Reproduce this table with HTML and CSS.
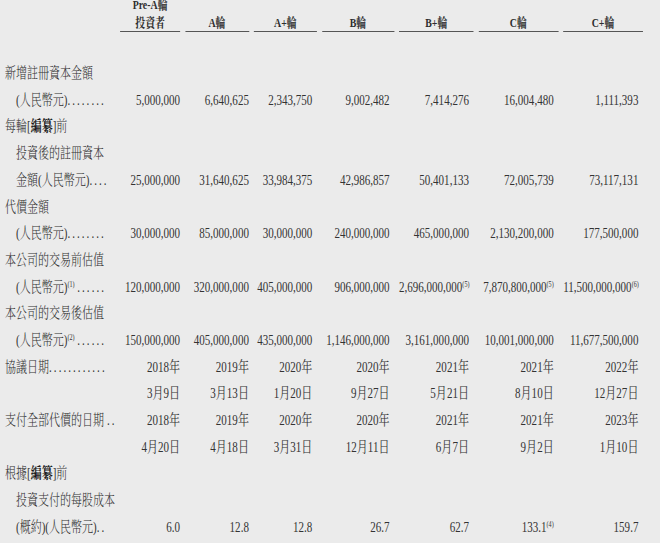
FILE: index.html
```html
<!DOCTYPE html>
<html lang="zh-Hant">
<head>
<meta charset="utf-8">
<title>投資者</title>
<link rel="stylesheet" href="styles.css">
</head>
<body>
<div class="frame">
<div class="page">
  <div class="row head">
    <div class="hl"></div>
    <div class="h">Pre-A輪<br>投資者</div>
    <div class="h">A輪</div>
    <div class="h">A+輪</div>
    <div class="h">B輪</div>
    <div class="h">B+輪</div>
    <div class="h">C輪</div>
    <div class="h">C+輪</div>
  </div>

  <div class="tbody">
    <div class="row"><div class="lab">新增註冊資本金額</div></div>
    <div class="row">
      <div class="lab in">(人民幣元)<span class="dots">........</span></div>
      <div class="v">5,000,000</div><div class="v">6,640,625</div><div class="v p">2,343,750</div><div class="v p">9,002,482</div><div class="v p">7,414,276</div><div class="v p">16,004,480</div><div class="v p">1,111,393</div>
    </div>
    <div class="row"><div class="lab">每輪[<b>編纂</b>]前</div></div>
    <div class="row"><div class="lab in">投資後的註冊資本</div></div>
    <div class="row">
      <div class="lab in">金額(人民幣元)<span class="dots">....</span></div>
      <div class="v">25,000,000</div><div class="v">31,640,625</div><div class="v p">33,984,375</div><div class="v p">42,986,857</div><div class="v p">50,401,133</div><div class="v p">72,005,739</div><div class="v p">73,117,131</div>
    </div>
    <div class="row"><div class="lab">代價金額</div></div>
    <div class="row">
      <div class="lab in">(人民幣元)<span class="dots">........</span></div>
      <div class="v">30,000,000</div><div class="v">85,000,000</div><div class="v p">30,000,000</div><div class="v p">240,000,000</div><div class="v p">465,000,000</div><div class="v p">2,130,200,000</div><div class="v p">177,500,000</div>
    </div>
    <div class="row"><div class="lab">本公司的交易前估值</div></div>
    <div class="row">
      <div class="lab in">(人民幣元)<span class="sup">(1)</span> <span class="dots">......</span></div>
      <div class="v">120,000,000</div><div class="v">320,000,000</div><div class="v p">405,000,000</div><div class="v p">906,000,000</div><div class="v p">2,696,000,000<span class="sup">(5)</span></div><div class="v p">7,870,800,000<span class="sup">(5)</span></div><div class="v p">11,500,000,000<span class="sup">(6)</span></div>
    </div>
    <div class="row"><div class="lab">本公司的交易後估值</div></div>
    <div class="row">
      <div class="lab in">(人民幣元)<span class="sup">(2)</span> <span class="dots">......</span></div>
      <div class="v">150,000,000</div><div class="v">405,000,000</div><div class="v p">435,000,000</div><div class="v p">1,146,000,000</div><div class="v p">3,161,000,000</div><div class="v p">10,001,000,000</div><div class="v p">11,677,500,000</div>
    </div>
    <div class="row">
      <div class="lab">協議日期<span class="dots">............</span></div>
      <div class="v">2018年</div><div class="v">2019年</div><div class="v p">2020年</div><div class="v p">2020年</div><div class="v p">2021年</div><div class="v p">2021年</div><div class="v p">2022年</div>
    </div>
    <div class="row">
      <div class="lab"></div>
      <div class="v">3月9日</div><div class="v">3月13日</div><div class="v p">1月20日</div><div class="v p">9月27日</div><div class="v p">5月21日</div><div class="v p">8月10日</div><div class="v p">12月27日</div>
    </div>
    <div class="row">
      <div class="lab">支付全部代價的日期 <span class="dots">..</span></div>
      <div class="v">2018年</div><div class="v">2019年</div><div class="v p">2020年</div><div class="v p">2020年</div><div class="v p">2021年</div><div class="v p">2021年</div><div class="v p">2023年</div>
    </div>
    <div class="row">
      <div class="lab"></div>
      <div class="v">4月20日</div><div class="v">4月18日</div><div class="v p">3月31日</div><div class="v p">12月11日</div><div class="v p">6月7日</div><div class="v p">9月2日</div><div class="v p">1月10日</div>
    </div>
    <div class="row"><div class="lab">根據[<b>編纂</b>]前</div></div>
    <div class="row"><div class="lab in">投資支付的每股成本</div></div>
    <div class="row">
      <div class="lab in">(概約)(人民幣元)<span class="dots">..</span></div>
      <div class="v">6.0</div><div class="v">12.8</div><div class="v p">12.8</div><div class="v p">26.7</div><div class="v p">62.7</div><div class="v p">133.1<span class="sup">(4)</span></div><div class="v p">159.7</div>
    </div>
  </div>
</div>
</div>
</body>
</html>
```

FILE: styles.css
```css
html, body {
  margin: 0;
  padding: 0;
  background: #ebebeb;
  overflow: hidden;
}
.frame {
  width: 660px;
  height: 543px;
  overflow: hidden;
}
.page {
  width: 868px;
  margin-right: -208px;
  transform: scaleX(0.76);
  transform-origin: 0 0;
  font-family: "Liberation Serif", "Noto Serif CJK TC", "Noto Sans CJK TC", serif;
  font-size: 14.5px;
  color: #333;
}
.row {
  display: grid;
  grid-template-columns: 151.5px 79px 84px 83px 95px 98px 105px 105px;
  column-gap: 6.5px;
  line-height: 26.7px;
  height: 26.7px;
}
.head {
  height: auto;
  margin-top: -4px;
  align-items: end;
  font-size: 13px;
  font-weight: bold;
  line-height: 17.7px;
  color: #2e2e2e;
}
.h {
  text-align: center;
  border-bottom: 1.5px solid #555;
}
.tbody {
  margin-top: 27.7px;
}
.lab {
  padding-left: 6.5px;
  white-space: nowrap;
  font-weight: 300;
}
.lab.in {
  padding-left: 21px;
}
.lab b {
  font-weight: bold;
  color: #1a1a1a;
}
.dots {
  letter-spacing: 2.7px;
}
.v {
  text-align: right;
  white-space: nowrap;
}
.v.p {
  padding-right: 6px;
}
.sup {
  font-size: 8px;
  vertical-align: 5px;
  line-height: 0;
  letter-spacing: 0;
}
```
